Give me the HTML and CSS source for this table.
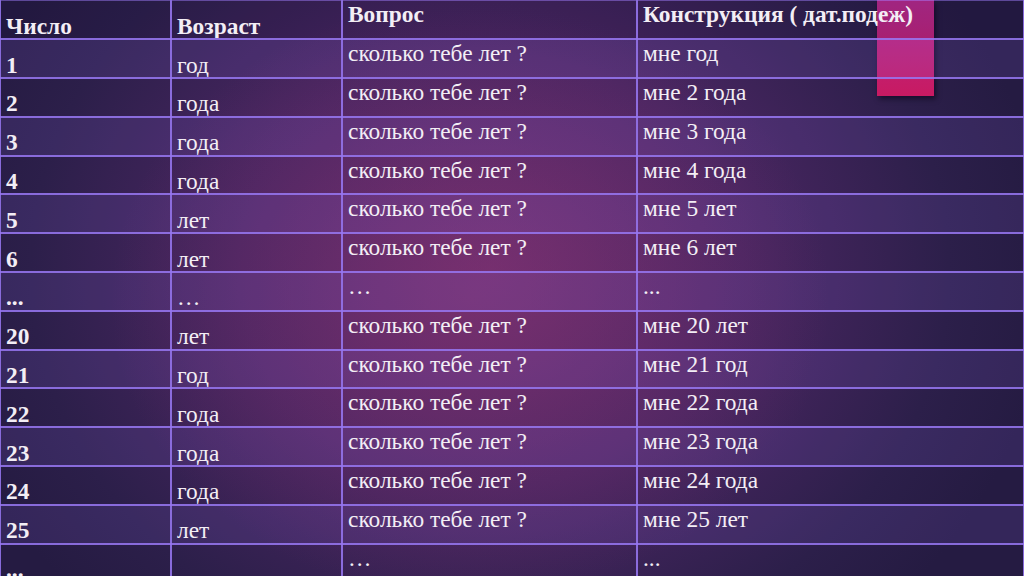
FILE: index.html
```html
<!DOCTYPE html>
<html lang="ru">
<head>
<meta charset="utf-8">
<title>Возраст</title>
<link rel="stylesheet" href="styles.css">
</head>
<body>
<div class="slide">
  <div class="ribbon"></div>
  <table class="grid">
    <colgroup>
      <col class="c1"><col class="c2"><col class="c3"><col class="c4">
    </colgroup>
    <tr class="head">
      <th class="bot">Число</th><th class="bot">Возраст</th><th class="top">Вопрос</th><th class="top">Конструкция ( дат.подеж)</th>
    </tr>
    <tr class="alt"><td class="num">1</td><td class="bot">год</td><td class="top">сколько тебе лет ?</td><td class="top">мне год</td></tr>
    <tr><td class="num">2</td><td class="bot">года</td><td class="top">сколько тебе лет ?</td><td class="top">мне 2 года</td></tr>
    <tr class="alt"><td class="num">3</td><td class="bot">года</td><td class="top">сколько тебе лет ?</td><td class="top">мне 3 года</td></tr>
    <tr><td class="num">4</td><td class="bot">года</td><td class="top">сколько тебе лет ?</td><td class="top">мне 4 года</td></tr>
    <tr class="alt"><td class="num">5</td><td class="bot">лет</td><td class="top">сколько тебе лет ?</td><td class="top">мне 5 лет</td></tr>
    <tr><td class="num">6</td><td class="bot">лет</td><td class="top">сколько тебе лет ?</td><td class="top">мне 6 лет</td></tr>
    <tr class="alt"><td class="num">...</td><td class="bot">…</td><td class="top">…</td><td class="top">...</td></tr>
    <tr><td class="num">20</td><td class="bot">лет</td><td class="top">сколько тебе лет ?</td><td class="top">мне 20 лет</td></tr>
    <tr class="alt"><td class="num">21</td><td class="bot">год</td><td class="top">сколько тебе лет ?</td><td class="top">мне 21 год</td></tr>
    <tr><td class="num">22</td><td class="bot">года</td><td class="top">сколько тебе лет ?</td><td class="top">мне 22 года</td></tr>
    <tr class="alt"><td class="num">23</td><td class="bot">года</td><td class="top">сколько тебе лет ?</td><td class="top">мне 23 года</td></tr>
    <tr><td class="num">24</td><td class="bot">года</td><td class="top">сколько тебе лет ?</td><td class="top">мне 24 года</td></tr>
    <tr class="alt"><td class="num">25</td><td class="bot">лет</td><td class="top">сколько тебе лет ?</td><td class="top">мне 25 лет</td></tr>
    <tr><td class="num">...</td><td class="bot"></td><td class="top">…</td><td class="top">...</td></tr>
  </table>
</div>
</body>
</html>
```

FILE: styles.css
```css
html, body {
  margin: 0;
  padding: 0;
  width: 1024px;
  height: 576px;
  overflow: hidden;
}
.slide {
  position: relative;
  width: 1024px;
  height: 576px;
  overflow: hidden;
  background:
    radial-gradient(ellipse 360px 300px at 470px 300px, rgba(135, 50, 110, 0.5), rgba(135, 50, 110, 0) 100%),
    radial-gradient(ellipse 560px 480px at 490px 270px, #682d70 0%, #4a2662 45%, #2c1f4a 82%, #251b42 100%);
  font-family: "Liberation Serif", "Times New Roman", serif;
  color: #f3eef5;
}
.ribbon {
  position: absolute;
  left: 877px;
  top: 0;
  width: 57px;
  height: 96px;
  background: linear-gradient(#b52a8c, #c81a62);
  box-shadow: 2px 3px 5px rgba(10, 0, 20, 0.55);
}
.grid {
  position: relative;
  z-index: 1;
  margin-left: -1px;
  border-collapse: collapse;
  table-layout: fixed;
  width: 1024px;
  font-size: 23.4px;
  line-height: 1.05;
}
.c1 { width: 171px; }
.c2 { width: 171px; }
.c3 { width: 295px; }
.c4 { width: 387px; }
.grid tr { height: 38.8px; }
.grid th, .grid td {
  border: 2px solid rgba(150, 118, 240, 0.88);
  padding: 1px 6px 0 5px;
  text-align: left;
  white-space: nowrap;
  overflow: hidden;
}
.grid tr:first-child th { border-top: 1px solid rgba(150, 118, 240, 0.5); }
.grid th { font-weight: bold; }
.grid .num { font-weight: bold; }
.grid .bot { vertical-align: bottom; }
.grid .num { vertical-align: bottom; }
.grid .top { vertical-align: top; }
.grid .alt { background: rgba(140, 110, 230, 0.15); }
.grid .head { background: rgba(20, 10, 50, 0.12); }
```
